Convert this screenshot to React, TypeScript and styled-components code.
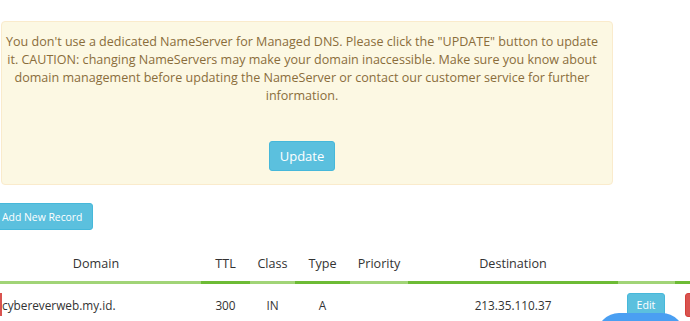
import React from 'react';
import styled, { createGlobalStyle } from 'styled-components';

const GlobalStyle = createGlobalStyle`
  html, body {
    margin: 0;
    padding: 0;
    background: #fff;
    overflow: hidden;
  }
  body {
    font-family: "Open Sans", "Noto Sans", sans-serif;
    color: #333;
  }
`;

const Page = styled.div`
  width: 690px;
  height: 321px;
  position: relative;
  overflow: hidden;
`;

const Alert = styled.div`
  margin: 21px 0 0 1px;
  width: 612px;
  box-sizing: border-box;
  height: 164px;
  padding: 11px 10px 0 0;
  background: #fcf8e3;
  border: 1px solid #faebcc;
  border-radius: 4px;
  color: #8a6d3b;
  font-size: 12.55px;
  line-height: 18px;
  text-align: center;
  display: flex;
  flex-direction: column;
  align-items: center;
`;

const Message = styled.p`
  margin: 0;
  white-space: nowrap;
`;

const Button = styled.button<{ $fs: number }>`
  display: block;
  background: #5bc0de;
  border: 1px solid #46b8da;
  border-radius: 3px;
  color: #fff;
  font-family: "Open Sans", sans-serif;
  font-size: ${({ $fs }) => $fs}px;
  padding: 0;
  white-space: nowrap;
  cursor: pointer;
`;

const UpdateButton = styled(Button)`
  margin-top: 36px;
  width: 66px;
  height: 30px;
`;

const AddButton = styled(Button)`
  margin: 18px 0 0 -6px;
  width: 99px;
  height: 27px;
  padding-left: 7px;
  text-align: left;
`;

const Table = styled.table`
  margin-top: 17px;
  border-collapse: collapse;
  table-layout: fixed;
  width: 740px;
`;

const Th = styled.th<{ $dark?: boolean; $w: number; $pr?: number }>`
  width: ${({ $w }) => $w}px;
  height: 35px;
  padding: 0 ${({ $pr }) => $pr || 0}px 0 0;
  font-size: 12.6px;
  font-weight: 400;
  color: #333;
  text-align: center;
  vertical-align: middle;
  border-bottom: 3px solid ${({ $dark }) => ($dark ? '#6dbb35' : '#a1d477')};
  box-sizing: border-box;
`;

const Td = styled.td<{ $align?: string }>`
  height: 42px;
  padding: 0;
  font-size: 11.8px;
  text-align: ${({ $align }) => $align || 'center'};
  vertical-align: middle;
  color: #333;
`;

const DomainCell = styled(Td)`
  position: relative;
  padding-left: 2px;
`;

const Marker = styled.span`
  position: absolute;
  left: 0;
  top: 9px;
  width: 2px;
  height: 23px;
  background: #d9534f;
`;

const EditButton = styled(Button)`
  width: 38px;
  height: 24px;
  margin-left: 9px;
  margin-top: 1px;
`;

const DeleteButton = styled.button`
  display: block;
  width: 30px;
  height: 24px;
  margin-left: 10px;
  margin-top: 1px;
  background: #d9534f;
  border: 1px solid #d43f3a;
  border-radius: 3px;
  padding: 0;
`;

const ChatBubble = styled.div`
  position: absolute;
  left: 597px;
  top: 313px;
  width: 87px;
  height: 40px;
  background: #4a9ff2;
  border-radius: 22px 22px 0 0;
`;

const columns = [
  { label: 'Domain', w: 201, dark: false, pr: 9 },
  { label: 'TTL', w: 49, dark: true },
  { label: 'Class', w: 45, dark: false },
  { label: 'Type', w: 55, dark: true },
  { label: 'Priority', w: 58, dark: false },
  { label: 'Destination', w: 210, dark: true },
  { label: '', w: 57, dark: false },
  { label: '', w: 65, dark: true },
];

export default function App() {
  return (
    <Page>
      <GlobalStyle />
      <Alert>
        <Message>
          You don't use a dedicated NameServer for Managed DNS. Please click the "UPDATE" button to update
          <br />
          it. CAUTION: changing NameServers may make your domain inaccessible. Make sure you know about
          <br />
          domain management before updating the NameServer or contact our customer service for further
          <br />
          information.
        </Message>
        <UpdateButton $fs={13}>Update</UpdateButton>
      </Alert>
      <AddButton $fs={10.4}>Add New Record</AddButton>
      <Table>
        <thead>
          <tr>
            {columns.map((c, i) => (
              <Th key={i} $w={c.w} $dark={c.dark} $pr={c.pr}>
                {c.label}
              </Th>
            ))}
          </tr>
        </thead>
        <tbody>
          <tr>
            <DomainCell $align="left">
              <Marker />
              cybereverweb.my.id.
            </DomainCell>
            <Td>300</Td>
            <Td>IN</Td>
            <Td>A</Td>
            <Td></Td>
            <Td>213.35.110.37</Td>
            <Td $align="left">
              <EditButton $fs={10.6}>Edit</EditButton>
            </Td>
            <Td $align="left">
              <DeleteButton />
            </Td>
          </tr>
        </tbody>
      </Table>
      <ChatBubble />
    </Page>
  );
}
